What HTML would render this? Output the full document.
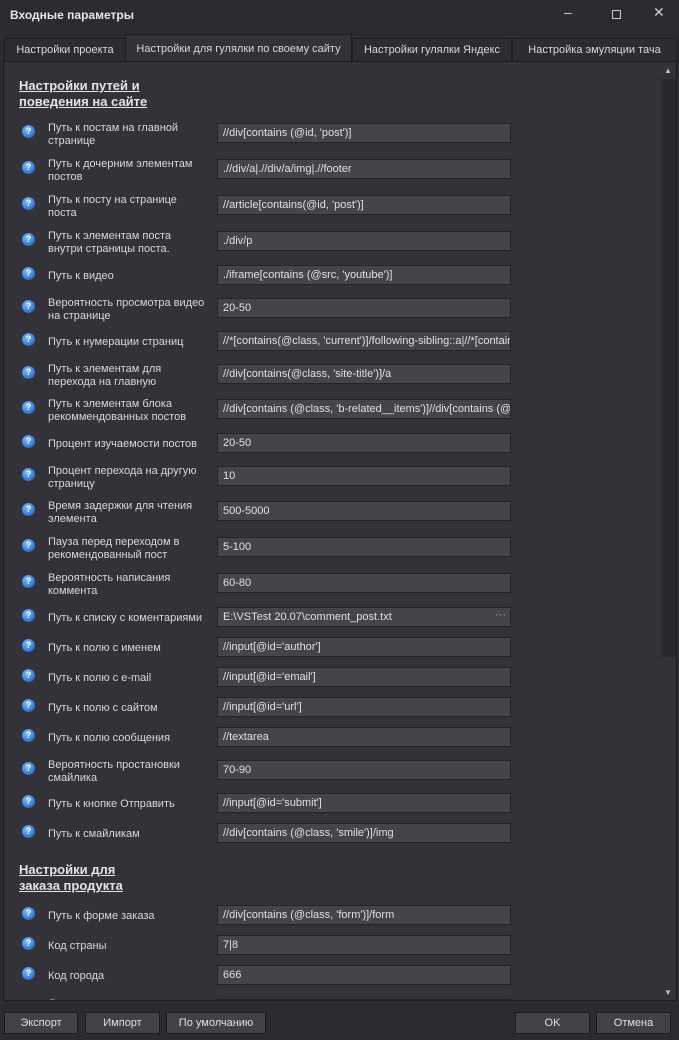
<!DOCTYPE html>
<html><head><meta charset="utf-8"><style>
*{margin:0;padding:0;box-sizing:border-box}
body{width:679px;height:1040px;background:#2c2b30;font-family:"Liberation Sans","DejaVu Sans",sans-serif;font-size:11px;color:#d6d6d6;position:relative;overflow:hidden}
.a{position:absolute}
.title{left:10px;top:8px;font-weight:bold;font-size:12px;color:#e6e6e6}
.tab{position:absolute;top:38px;height:24px;background:#2d2c31;border:1px solid #1f1e22;border-bottom:none;line-height:22px;text-align:center;font-size:11px;color:#d8d8d8}
.tab.act{top:34px;height:28px;background:#333238;line-height:28px}
.panel{left:3px;top:61px;width:674px;height:940px;background:#333238;border:1px solid #1f1e22;overflow:hidden}
.sb{left:657px;top:17px;width:16px;height:578px;background:#29282d}
.q{position:absolute;left:18px;width:13px;height:13px;border-radius:50%;background:radial-gradient(circle at 40% 35%,#7fc0ff,#2a72d0 70%,#1d4f9a);color:#fff;font-size:9px;font-weight:bold;text-align:center;line-height:13px}
.l{position:absolute;left:44px;line-height:13px;font-size:11px;color:#d8d8d8;white-space:nowrap}
.i{position:absolute;left:213px;width:294px;height:20px;background:#45444a;border:1px solid #252429;line-height:18px;padding-left:5px;white-space:nowrap;overflow:hidden;font-size:11px;color:#e0e0e0}
.h{position:absolute;left:15px;font-weight:bold;font-size:13px;line-height:16px;text-decoration:underline;color:#e4e4e4}
.btn{position:absolute;top:1012px;height:22px;background:#424147;border:1px solid #1f1e22;text-align:center;line-height:20px;font-size:11px;color:#e0e0e0}
</style></head><body>
<div class="a title">Входные параметры</div>
<div class="a" style="left:564px;top:4px;font-size:14px;color:#ccc">–</div>
<div class="a" style="left:612px;top:10px;width:9px;height:9px;border:1px solid #ccc"></div>
<div class="a" style="left:653px;top:4px;font-size:14px;color:#ccc">✕</div>
<div class="tab" style="left:4px;width:122px">Настройки проекта</div>
<div class="tab act" style="left:125px;width:227px">Настройки для гулялки по своему сайту</div>
<div class="tab" style="left:352px;width:160px">Настройки гулялки Яндекс</div>
<div class="tab" style="left:512px;width:165px">Настройка эмуляции тача</div>
<div class="a panel">
<div class="a sb"></div>
<div class="a" style="left:660px;top:4px;font-size:8px;color:#bbb">▲</div>
<div class="a" style="left:660px;top:926px;font-size:8px;color:#bbb">▼</div>
<div class="h" style="top:16px">Настройки путей и<br>поведения на сайте</div>
<div class="h" style="top:800px">Настройки для<br>заказа продукта</div>
<div id="rows"></div>
</div>
<div class="btn" style="left:4px;width:74px">Экспорт</div>
<div class="btn" style="left:85px;width:75px">Импорт</div>
<div class="btn" style="left:166px;width:100px">По умолчанию</div>
<div class="btn" style="left:515px;width:75px">OK</div>
<div class="btn" style="left:596px;width:75px">Отмена</div>
<script>
var R=[[133,"Путь к постам на главной|странице","//div[contains (@id, 'post')]"],
[169,"Путь к дочерним элементам|постов",".//div/a|.//div/a/img|.//footer"],
[205,"Путь к посту на странице|поста","//article[contains(@id, 'post')]"],
[241,"Путь к элементам поста|внутри страницы поста.","./div/p"],
[275,"Путь к видео","./iframe[contains (@src, 'youtube')]"],
[308,"Вероятность просмотра видео|на странице","20-50"],
[341,"Путь к нумерации страниц","//*[contains(@class, 'current')]/following-sibling::a|//*[contains(@class"],
[374,"Путь к элементам для|перехода на главную","//div[contains(@class, 'site-title')]/a"],
[409,"Путь к элементам блока|рекоммендованных постов","//div[contains (@class, 'b-related__items')]//div[contains (@class"],
[443,"Процент изучаемости постов","20-50"],
[476,"Процент перехода на другую|страницу","10"],
[511,"Время задержки для чтения|элемента","500-5000"],
[547,"Пауза перед переходом в|рекомендованный пост","5-100"],
[583,"Вероятность написания|коммента","60-80"],
[617,"Путь к списку с коментариями","E:\\VSTest 20.07\\comment_post.txt"],
[647,"Путь к полю с именем","//input[@id='author']"],
[677,"Путь к полю с e-mail","//input[@id='email']"],
[707,"Путь к полю с сайтом","//input[@id='url']"],
[737,"Путь к полю сообщения","//textarea"],
[770,"Вероятность простановки|смайлика","70-90"],
[803,"Путь к кнопке Отправить","//input[@id='submit']"],
[833,"Путь к смайликам","//div[contains (@class, 'smile')]/img"],
[915,"Путь к форме заказа","//div[contains (@class, 'form')]/form"],
[945,"Код страны","7|8"],
[975,"Код города","666"],
[1009,"Диапазон генерируемого|номера",""]];
var h="";R.forEach(function(r){var y=r[0]-62;var two=r[1].indexOf("|")>=0;
h+='<div class="q" style="top:'+(y-8)+'px">?</div>';
h+='<div class="l" style="top:'+(y-(two?11:5))+'px">'+r[1].replace("|","<br>")+'</div>';
h+='<div class="i" style="top:'+(y-10)+'px">'+r[2].replace(/</g,"&lt;")+(r[1].indexOf("коментариями")>0?'<span style="position:absolute;right:4px;top:-2px;color:#aaa">···</span>':'')+'</div>';});
document.getElementById("rows").innerHTML=h;
</script>
</body></html>
